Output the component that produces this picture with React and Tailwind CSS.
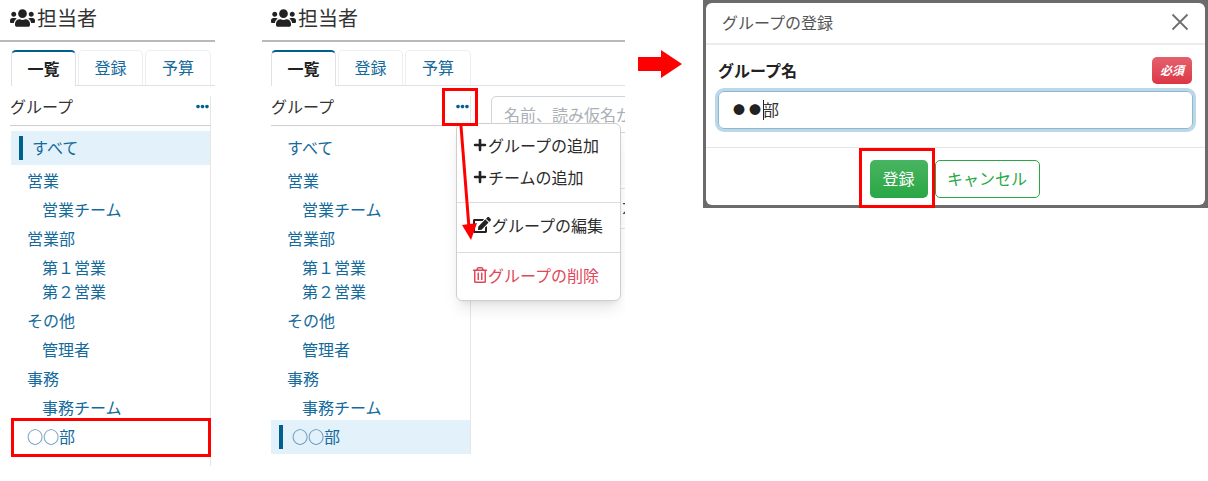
import React from "react";
import { FaUsers, FaPlus, FaEdit, FaRegTrashAlt, FaEllipsisH } from "react-icons/fa";

const font = { fontFamily: '"Noto Sans CJK JP", "Noto Sans", sans-serif' };

const groups = [
    { name: "営業", top: "mt-[4px]", teams: [{ name: "営業チーム", cls: "mt-[5px]" }] },
    { name: "営業部", top: "mt-[5px]", teams: [{ name: "第１営業", cls: "mt-[5px]" }, { name: "第２営業", cls: "" }] },
    { name: "その他", top: "mt-[5px]", teams: [{ name: "管理者", cls: "mt-[5px]" }] },
    { name: "事務", top: "mt-[5px]", teams: [{ name: "事務チーム", cls: "mt-[5px]" }] },
];

const SideRow = ({ name, selected }) => (
    <div className={`h-[34px] flex items-center text-[16px] text-[#136a9b] ${selected ? "bg-[#e3f1fb]" : ""}`}>
        {selected ? <span className="ml-[8px] mr-[9px] w-[4px] h-[24px] bg-[#00608d]"></span> : <span className="w-[16px]"></span>}
        <span className="pb-[3px]">{name}</span>
    </div>
);

const Sidebar = ({ last }) => (
    <div className="w-[200px] border-r border-[#e6e6e6]">
        <div className="h-[5px]"></div>
        <SideRow name="すべて" selected={!last} />
        {groups.map((group) => (
            <div key={group.name} className={group.top}>
                <div className="pl-[16px] h-[24px] leading-[22px] text-[16px] text-[#136a9b]">{group.name}</div>
                {group.teams.map((team) => (
                    <div key={team.name} className={`pl-[31px] h-[24px] leading-[22px] text-[16px] text-[#136a9b] ${team.cls}`}>{team.name}</div>
                ))}
            </div>
        ))}
        <SideRow name="○○部" selected={last} />
    </div>
);

const Tabs = () => (
    <div className="flex gap-[2px] border-b border-[#dee2e6] h-[36px] mt-[8px]">
        <div className="w-[65px] h-[36px] pb-[3px] flex items-center justify-center bg-white border border-b-0 border-[#dee2e6] border-t-[2px] border-t-[#00608d] rounded-t-[5px] text-[16px] font-bold text-[#222]">一覧</div>
        <div className="w-[65px] h-[35px] pb-[3px] flex items-center justify-center border border-b-0 border-[#eceff2] rounded-t-[5px] text-[16px] text-[#136a9b]">登録</div>
        <div className="w-[66px] h-[35px] pb-[3px] flex items-center justify-center border border-b-0 border-[#eceff2] rounded-t-[5px] text-[16px] text-[#136a9b]">予算</div>
    </div>
);

const Title = ({ pad }) => (
    <div className={`h-[42px] border-b-2 border-[#b9b9b9] flex items-center text-[20px] text-[#333] pb-[4px] ${pad}`}>
        <FaUsers className="text-[#222] w-[25px] h-[20px] mr-[2px]" />
        <span>担当者</span>
    </div>
);

const GroupHead = ({ width }) => (
    <div className={`h-[40px] pt-[10px] ${width}`}>
        <div className="h-[30px] flex items-start justify-between border-b border-r border-b-[#cfcfcf] border-r-[#e6e6e6] text-[16px] text-[#333]">
            <span className="leading-[20px]">グループ</span>
            <FaEllipsisH className="text-[#00608d] w-[13px] h-[13px] mr-[1px] mt-[4px]" />
        </div>
    </div>
);

const MenuItem = ({ icon, label, danger }) => (
    <div className={`flex items-center gap-[1px] h-[32px] pl-[16px] text-[16px] ${danger ? "text-[#e0475a]" : "text-[#2b2b2b]"}`}>
        {icon}
        <span>{label}</span>
    </div>
);

const App = () => {
    return (
        <div className="relative w-[1208px] h-[481px] bg-white overflow-hidden flex items-start" style={font}>
            {/* left panel */}
            <div className="w-[215px] shrink-0">
                <Title pad="pl-[10px]" />
                <div className="pl-[11px]">
                    <Tabs />
                </div>
                <div className="pl-[10px]">
                    <GroupHead width="w-[201px]" />
                </div>
                <div className="pl-[11px]">
                    <Sidebar last={false} />
                    <div className="w-[200px] h-[12px] border-r border-[#e6e6e6]"></div>
                </div>
            </div>

            {/* middle panel */}
            <div className="relative ml-[47px] w-[363px] shrink-0 overflow-hidden h-[481px]">
                <Title pad="pl-[9px]" />
                <div className="pl-[9px]">
                    <Tabs />
                </div>
                <div className="flex pl-[9px]">
                    <div>
                        <GroupHead width="w-[200px]" />
                        <Sidebar last={true} />
                    </div>
                    <div className="ml-[20px] mt-[10px] w-[160px] shrink-0">
                        <div className="h-[37px] border border-[#ced4da] rounded-[5px] pl-[12px] pb-[2px] flex items-center text-[16px] text-[#a9b0b6] whitespace-nowrap overflow-hidden">
                            名前、読み仮名か
                        </div>
                        <div className="mt-[55px] h-[41px] border-y border-[#e2e2e2] pl-[130px] flex items-center text-[16px] text-[#333] pb-[6px]">
                            カ
                        </div>
                    </div>
                </div>
                {/* dropdown menu */}
                <div className="absolute left-[194px] top-[123px] w-[165px] h-[178px] bg-white border border-[#cfcfcf] rounded-[6px] shadow-lg">
                    <div className="pt-[5px]">
                        <MenuItem icon={<FaPlus className="w-[14px] h-[14px] text-[#222]" />} label="グループの追加" />
                        <MenuItem icon={<FaPlus className="w-[14px] h-[14px] text-[#222]" />} label="チームの追加" />
                    </div>
                    <div className="mt-[9px] border-t border-[#dcdcdc] pt-[6px] pb-[11px]">
                        <MenuItem icon={<FaEdit className="w-[18px] h-[16px] text-[#222]" />} label="グループの編集" />
                    </div>
                    <div className="border-t border-[#dcdcdc] pt-[6px]">
                        <MenuItem danger icon={<FaRegTrashAlt className="w-[14px] h-[16px]" />} label="グループの削除" />
                    </div>
                </div>
            </div>

            {/* big arrow */}
            <svg className="ml-[13px] mt-[50px] shrink-0" width="44" height="28" viewBox="0 0 44 28">
                <path d="M0 7 H23 V0 L44 14 L23 28 V21 H0 Z" fill="#ff0000" />
            </svg>

            {/* modal */}
            <div className="ml-[21px] w-[505px] h-[208px] shrink-0 bg-[#6b6b6b] p-[3px]">
                <div className="h-[202px] bg-white rounded-[6px]">
                    <div className="h-[42px] border-b-2 border-[#ececec] flex items-center justify-between px-[16px] pb-[2px] text-[16px] text-[#555]">
                        <span>グループの登録</span>
                        <svg width="18" height="18" viewBox="0 0 18 18">
                            <path d="M1.5 1.5 L16.5 16.5 M16.5 1.5 L1.5 16.5" stroke="#6f6f6f" strokeWidth="1.8" fill="none" />
                        </svg>
                    </div>
                    <div className="px-[12px] h-[103px] border-b border-[#e4e4e4]">
                        <div className="flex items-center justify-between h-[39px] pr-[1px] pt-[11px]">
                            <span className="text-[16px] font-bold text-[#222]">グループ名</span>
                            <span className="w-[40px] h-[27px] rounded-[5px] bg-gradient-to-b from-[#e4606d] to-[#dc3545] text-white text-[12px] font-bold italic flex items-center justify-center">必須</span>
                        </div>
                        <div className="mt-[7px] h-[38px] w-[475px] border border-[#8cb8d2] rounded-[6px] ring-[3px] ring-[#bcd8e8] flex items-center pl-[12px] text-[16px] text-[#333]">
                            <span className="w-[16px] text-center text-[12px] text-[#222]">●</span>
                            <span className="w-[16px] text-center text-[12px] text-[#222]">●</span>
                            <span className="w-px h-[20px] bg-[#222]"></span>
                            <span className="ml-[-1px] pb-[3px]">部</span>
                        </div>
                    </div>
                    <div className="flex justify-center gap-[7px] pt-[12px] pr-[2px]">
                        <div className="w-[58px] h-[38px] pb-[3px] rounded-[5px] bg-gradient-to-b from-[#48b461] to-[#28a745] text-white text-[16px] flex items-center justify-center">登録</div>
                        <div className="w-[105px] h-[38px] pb-[3px] rounded-[5px] border border-[#28a745] text-[#28a745] text-[16px] flex items-center justify-center">キャンセル</div>
                    </div>
                </div>
            </div>

            {/* red annotations */}
            <div className="absolute left-[11px] top-[418px] w-[200px] h-[39px] border-[3px] border-[#ff0000]"></div>
            <div className="absolute left-[442px] top-[88px] w-[36px] h-[38px] border-[3px] border-[#ff0000]"></div>
            <div className="absolute left-[859px] top-[148px] w-[76px] h-[60px] border-[3px] border-[#ff0000]"></div>
            <svg className="absolute left-[455px] top-[124px]" width="30" height="120" viewBox="0 0 30 120">
                <path d="M6 2 L14 104" stroke="#ff0000" strokeWidth="3" fill="none" />
                <path d="M7 101 L22 99 L16 116 Z" fill="#ff0000" />
            </svg>
        </div>
    );
};

export default App;
